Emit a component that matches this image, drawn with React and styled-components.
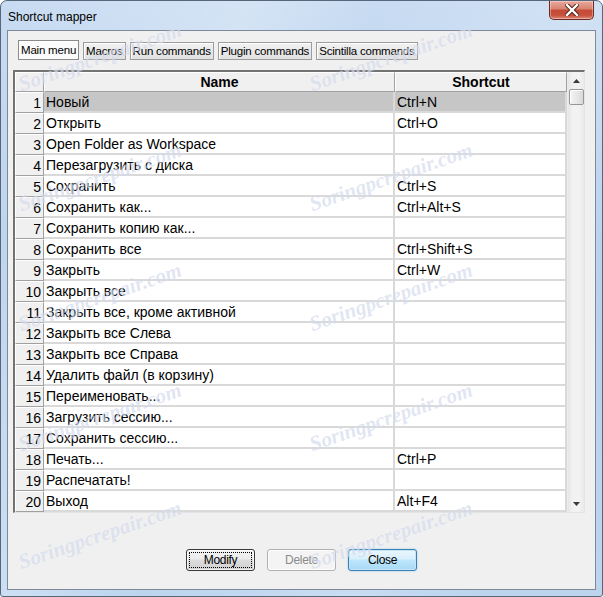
import React from 'react'
import styled, { createGlobalStyle } from 'styled-components';

const GlobalStyle = createGlobalStyle`
  html, body {
    margin: 0;
    padding: 0;
    background: #ffffff;
  }
  * {
    box-sizing: border-box;
  }
`;

const rows = [
  ['Новый', 'Ctrl+N'],
  ['Открыть', 'Ctrl+O'],
  ['Open Folder as Workspace', ''],
  ['Перезагрузить с диска', ''],
  ['Сохранить', 'Ctrl+S'],
  ['Сохранить как...', 'Ctrl+Alt+S'],
  ['Сохранить копию как...', ''],
  ['Сохранить все', 'Ctrl+Shift+S'],
  ['Закрыть', 'Ctrl+W'],
  ['Закрыть все', ''],
  ['Закрыть все, кроме активной', ''],
  ['Закрыть все Слева', ''],
  ['Закрыть все Справа', ''],
  ['Удалить файл (в корзину)', ''],
  ['Переименовать...', ''],
  ['Загрузить сессию...', ''],
  ['Сохранить сессию...', ''],
  ['Печать...', 'Ctrl+P'],
  ['Распечатать!', ''],
  ['Выход', 'Alt+F4'],
];

const tabs = ['Main menu', 'Macros', 'Run commands', 'Plugin commands', 'Scintilla commands'];

// watermark spots: bottom-left corner of each rotated label
const markRows = [95, 215, 335, 455, 573];
const marks = markRows.flatMap((y) => [{ x: 22, y }, { x: 313, y }]);

const Window = styled.div`
  position: relative;
  width: 603px;
  height: 597px;
  display: flex;
  flex-direction: column;
  border: 1px solid #56677c;
  border-radius: 7px 7px 3px 3px;
  overflow: hidden;
  background:
    linear-gradient(112deg, rgba(255,255,255,0) 0%, rgba(255,255,255,0.25) 30%, rgba(255,255,255,0) 45%, rgba(255,255,255,0.2) 70%, rgba(255,255,255,0) 85%),
    linear-gradient(to bottom, #c7dbf2 0%, #b9d1ec 40%, #bcd4ee 100%);
  font-family: "Liberation Sans", Arial, sans-serif;
`;

const TitleBar = styled.div`
  height: 29px;
  display: flex;
  align-items: flex-start;
  padding-left: 7px;
`;

const Title = styled.div`
  padding-top: 9px;
  font-size: 12px;
  line-height: 14px;
  color: #000;
`;

const CloseButton = styled.div`
  margin-left: auto;
  margin-right: 8px;
  width: 45px;
  height: 19px;
  border: 1px solid #6e2a22;
  border-top: none;
  border-radius: 0 0 5px 5px;
  background: linear-gradient(to bottom, #e9a99c 0%, #d9826f 45%, #c24a36 50%, #c8523e 80%, #dd8a78 100%);
  box-shadow: inset 0 0 0 1px rgba(255,255,255,0.35);
  display: flex;
  align-items: center;
  justify-content: center;
`;

const Client = styled.div`
  flex: 1;
  margin: 0 6px 6px;
  border: 1px solid #7d8898;
  background: #f0f0f0;
  display: flex;
  flex-direction: column;
  padding: 9px 8px 0 5px;
`;

const TabBar = styled.div`
  display: flex;
  align-items: flex-end;
  gap: 4px;
  height: 20px;
  margin-left: 5px;
`;

const Tab = styled.div`
  height: ${(p) => (p.active ? '20px' : '18px')};
  padding: 0 2px;
  border: 1px solid ${(p) => (p.active ? '#8a8a8a' : '#9c9c9c')};
  background: ${(p) => (p.active ? '#fbfbfb' : 'linear-gradient(to bottom, #f1f1f1, #e1e1e1)')};
  box-shadow: inset 1px 1px 0 #ffffff;
  font-size: 11.5px;
  letter-spacing: -0.2px;
  color: #000;
  display: flex;
  align-items: center;
  white-space: nowrap;
`;

const Grid = styled.div`
  margin-top: 10px;
  width: 572px;
  height: 443px;
  display: flex;
  border-top: 2px solid #737373;
  border-left: 2px solid #737373;
  border-right: 1px solid #e4e4e4;
  border-bottom: 1px solid #e4e4e4;
  background: #ffffff;
`;

const GridBody = styled.div`
  flex: 1;
  display: flex;
  flex-direction: column;
`;

const Row = styled.div`
  display: grid;
  grid-template-columns: 29px 351px 172px;
  height: ${(p) => (p.header ? '20px' : '21px')};
`;

const HeadCell = styled.div`
  background: #f0f0f0;
  border-top: 1px solid #ffffff;
  border-left: 1px solid #ffffff;
  border-right: 1px solid #a0a0a0;
  border-bottom: 1px solid #a0a0a0;
  font-size: 14px;
  font-weight: bold;
  color: #000;
  display: flex;
  align-items: center;
  justify-content: center;
`;

const NumCell = styled.div`
  background: #f0f0f0;
  border-top: 1px solid #ffffff;
  border-left: 1px solid #ffffff;
  border-right: 1px solid #a0a0a0;
  border-bottom: 1px solid #a0a0a0;
  font-size: 14px;
  color: #000;
  display: flex;
  align-items: center;
  justify-content: flex-end;
  padding-right: 2px;
`;

const Cell = styled.div`
  background: ${(p) => (p.selected ? '#c6c6c6' : '#ffffff')};
  border-right: 2px solid #d9d9d9;
  border-bottom: 2px solid #d9d9d9;
  font-size: 14px;
  color: #000;
  display: flex;
  align-items: center;
  padding-left: 2px;
  white-space: nowrap;
  overflow: hidden;
`;

const ScrollBar = styled.div`
  width: 17px;
  display: flex;
  flex-direction: column;
  align-items: center;
  background: linear-gradient(to right, #e6e6e6, #f2f2f2 30%, #f2f2f2 70%, #e9e9e9);
  border-left: 1px solid #ececec;
`;

const ArrowBox = styled.div`
  width: 17px;
  height: 17px;
  display: flex;
  align-items: center;
  justify-content: center;
`;

const Thumb = styled.div`
  width: 15px;
  height: 16px;
  border: 1px solid #979797;
  border-radius: 2px;
  background: linear-gradient(to right, #f5f5f5, #e8e8e8 50%, #d9d9d9);
  box-shadow: inset 1px 1px 0 #ffffff;
`;

const Track = styled.div`
  flex: 1;
`;

const ButtonRow = styled.div`
  margin-top: 36px;
  display: flex;
  justify-content: center;
  gap: 12px;
  padding-left: 3px;
`;

const Button = styled.div`
  width: 69px;
  height: 22px;
  border-radius: 3px;
  font-size: 12px;
  letter-spacing: -0.3px;
  display: flex;
  align-items: center;
  justify-content: center;
  position: relative;
  color: ${(p) => (p.disabled ? '#8a8a8a' : '#000')};
  border: 1px solid ${(p) => (p.variant === 'focus' ? '#3c7fb1' : p.disabled ? '#adb2b5' : '#3a3a3a')};
  background: ${(p) =>
    p.variant === 'focus'
      ? 'linear-gradient(to bottom, #eaf6fd 0%, #d9f0fc 45%, #bee6fd 50%, #a7d9f5 100%)'
      : p.disabled
      ? '#f4f4f4'
      : 'linear-gradient(to bottom, #f2f2f2 0%, #ebebeb 45%, #dddddd 50%, #cfcfcf 100%)'};
  box-shadow: ${(p) => (p.variant === 'focus' ? 'inset 0 0 0 1px #c4e5f6, 0 0 2px #8cc8ef' : 'inset 0 0 0 1px rgba(255,255,255,0.7)')};
`;

const FocusRing = styled.span`
  position: absolute;
  inset: 2px;
  border: 1px dotted #000;
  border-radius: 1px;
`;

const Watermark = styled.div`
  position: absolute;
  pointer-events: none;
  font-family: "Liberation Serif", serif;
  font-style: italic;
  font-weight: bold;
  font-size: 21px;
  color: rgba(150, 168, 210, 0.3);
  text-shadow: 0 0 1px rgba(255,255,255,0.6);
  transform: rotate(-19deg);
  transform-origin: left bottom;
  line-height: 24px;
  margin-top: -24px;
  white-space: nowrap;
`;

const UpArrow = () => (
  <svg width="7" height="4" viewBox="0 0 7 4">
    <polygon points="3.5,0 7,4 0,4" fill="#3a3a3a" />
  </svg>
);

const DownArrow = () => (
  <svg width="7" height="4" viewBox="0 0 7 4">
    <polygon points="0,0 7,0 3.5,4" fill="#3a3a3a" />
  </svg>
);

const App = () => {
  return (
    <>
      <GlobalStyle />
      <Window>
        <TitleBar>
          <Title>Shortcut mapper</Title>
          <CloseButton>
            <svg width="14" height="12" viewBox="0 0 14 12">
              <path d="M2 1 L12 11 M12 1 L2 11" stroke="#4a1d17" strokeWidth="4.2" strokeLinecap="square" />
              <path d="M2 1 L12 11 M12 1 L2 11" stroke="#ffffff" strokeWidth="2.4" strokeLinecap="square" />
            </svg>
          </CloseButton>
        </TitleBar>
        <Client>
          <TabBar>
            {tabs.map((t, i) => (
              <Tab key={t} active={i === 0}>{t}</Tab>
            ))}
          </TabBar>
          <Grid>
            <GridBody>
              <Row header>
                <HeadCell />
                <HeadCell>Name</HeadCell>
                <HeadCell>Shortcut</HeadCell>
              </Row>
              {rows.map(([name, key], i) => (
                <Row key={i}>
                  <NumCell>{i + 1}</NumCell>
                  <Cell selected={i === 0}>{name}</Cell>
                  <Cell selected={i === 0}>{key}</Cell>
                </Row>
              ))}
            </GridBody>
            <ScrollBar>
              <ArrowBox><UpArrow /></ArrowBox>
              <Thumb />
              <Track />
              <ArrowBox><DownArrow /></ArrowBox>
            </ScrollBar>
          </Grid>
          <ButtonRow>
            <Button><FocusRing />Modify</Button>
            <Button disabled>Delete</Button>
            <Button variant="focus">Close</Button>
          </ButtonRow>
        </Client>
        {marks.map((m, i) => (
          <Watermark key={i} style={{ left: m.x, top: m.y }}>Soringpcrepair.com</Watermark>
        ))}
      </Window>
    </>
  )
}

export default App
